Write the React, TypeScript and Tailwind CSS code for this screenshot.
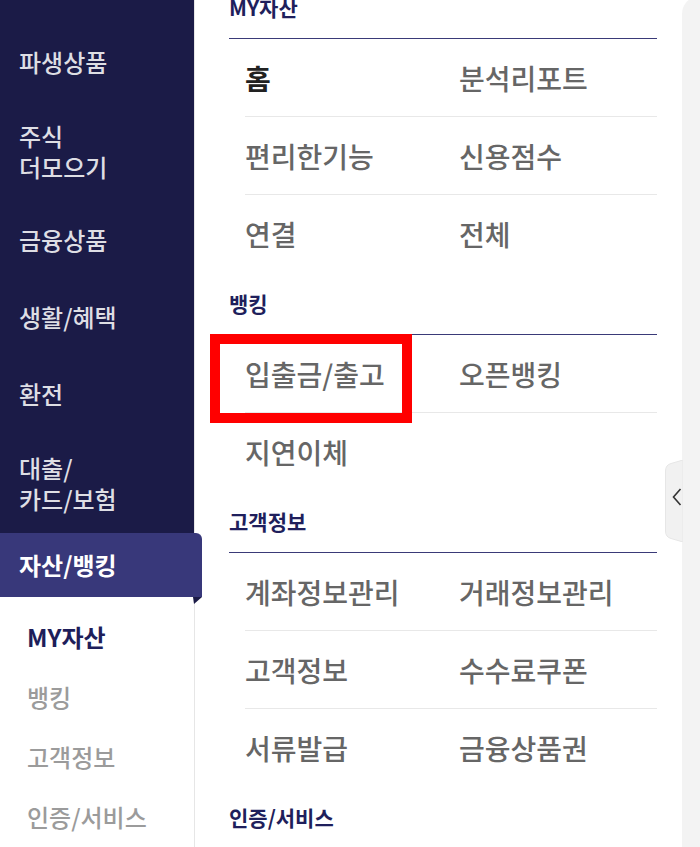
import React from 'react'

type Cell = { label: string; strong?: boolean }

const sections: { title: string; rows: Cell[][] }[] = [
  {
    title: 'MY자산',
    rows: [
      [{ label: '홈', strong: true }, { label: '분석리포트' }],
      [{ label: '편리한기능' }, { label: '신용점수' }],
      [{ label: '연결' }, { label: '전체' }],
    ],
  },
  {
    title: '뱅킹',
    rows: [[{ label: '입출금/출고' }, { label: '오픈뱅킹' }], [{ label: '지연이체' }]],
  },
  {
    title: '고객정보',
    rows: [
      [{ label: '계좌정보관리' }, { label: '거래정보관리' }],
      [{ label: '고객정보' }, { label: '수수료쿠폰' }],
      [{ label: '서류발급' }, { label: '금융상품권' }],
    ],
  },
  { title: '인증/서비스', rows: [] },
]

const sideMenu = [
  { lines: ['파생상품'], h: 'h-[78px]' },
  { lines: ['주식', '더모으기'], h: 'h-[101px]' },
  { lines: ['금융상품'], h: 'h-[77px]' },
  { lines: ['생활/혜택'], h: 'h-[77px]' },
  { lines: ['환전'], h: 'h-[77px]' },
  { lines: ['대출/', '카드/보험'], h: 'h-[101px]' },
]

const subMenu = ['MY자산', '뱅킹', '고객정보', '인증/서비스']

export default function App() {
  return (
    <div className="relative w-[700px] h-[847px] overflow-hidden bg-white font-['Noto_Sans_CJK_KR','Noto_Sans',sans-serif]">
      <div className="flex h-full">
        {/* Sidebar */}
        <aside className="w-[195px] shrink-0 border-r border-[#e6e6e6] flex flex-col">
          <div className="bg-[#1b1b47] pt-[22px]">
            {sideMenu.map((m) => (
              <div key={m.lines.join()} className={`${m.h} flex flex-col justify-center pl-[19px] text-[24px] font-medium leading-[31px] text-[#dedee4]`}>
                {m.lines.map((l) => (
                  <span key={l}>{l}</span>
                ))}
              </div>
            ))}
          </div>
          <div className="relative z-10 w-[202px] h-[69px] bg-[#38387a] rounded-tr-[6px] flex items-center pl-[19px] text-[24px] font-bold text-white">
            자산/뱅킹
            <svg className="absolute right-0 top-full" width="9" height="7" viewBox="0 0 9 7">
              <path d="M0 0 H9 L1 7 Z" fill="#1b1b47" />
            </svg>
          </div>
          <div className="pt-[10px]">
            {subMenu.map((s, i) => (
              <div
                key={s}
                className={`h-[60px] flex items-center pl-[27px] text-[24px] ${
                  i === 0 ? 'font-bold text-[#1e1e5a]' : 'font-medium text-[#9b9b9b]'
                }`}
              >
                {s}
              </div>
            ))}
          </div>
        </aside>

        {/* Content */}
        <main className="flex-1 pl-[34px] pr-[25px]">
          <div className="-mt-[23px]">
            {sections.map((sec) => (
              <section key={sec.title}>
                <div className="h-[62px] flex items-center border-b border-[#3a3a78] text-[21px] font-bold text-[#1f1f5c]">
                  {sec.title}
                </div>
                <div className="ml-[16px]">
                  {sec.rows.map((row, ri) => (
                    <div
                      key={ri}
                      className={`flex h-[78px] items-center ${ri < sec.rows.length - 1 ? 'border-b border-[#e8e8e8]' : ''}`}
                    >
                      {row.map((c, ci) => (
                        <div
                          key={c.label}
                          className={`${ci === 0 ? 'w-[214px]' : 'flex-1'} text-[28px] ${
                            c.strong ? 'font-bold text-[#222]' : 'font-medium text-[#666]'
                          }`}
                        >
                          {c.label}
                        </div>
                      ))}
                    </div>
                  ))}
                </div>
              </section>
            ))}
          </div>
        </main>

        {/* Right drawer */}
        <div className="relative w-[18px] shrink-0 -mt-[4px] bg-[#f3f3f3] rounded-tl-[20px]">
          <div className="absolute -left-[17px] top-[464px] w-[18px] h-[82px]">
            <svg width="18" height="82" viewBox="0 0 18 82" className="absolute inset-0">
              <path d="M18 0 L6 3.5 Q0.5 5 0.5 11 L0.5 71 Q0.5 77 6 78.5 L18 82 Z" fill="#f1f1f1" stroke="#e6e6e6" />
            </svg>
            <svg width="10" height="18" viewBox="0 0 10 18" className="absolute left-[7px] top-[28px]">
              <path d="M8.5 1 L1.5 9 L8.5 17" fill="none" stroke="#333" strokeWidth="1.6" />
            </svg>
          </div>
        </div>
      </div>

      {/* highlight annotation */}
      <div className="absolute left-[210px] top-[334px] w-[202px] h-[89px] border-[10px] border-[#ff0000]" />
    </div>
  )
}
